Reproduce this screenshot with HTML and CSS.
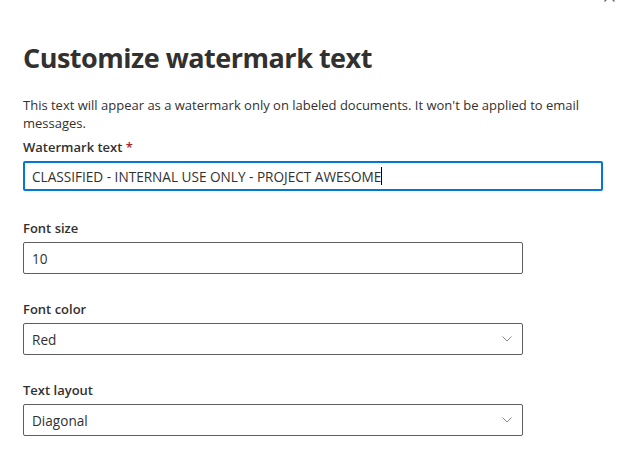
FILE: index.html
```html
<!DOCTYPE html>
<html>
<head>
<meta charset="utf-8">
<link rel="stylesheet" href="styles.css">
</head>
<body>
<div class="panel">
  <button class="close" aria-label="Close">
    <svg width="11" height="11" viewBox="0 0 11 11"><path d="M0.5 0.5 L10.5 10.5 M10.5 0.5 L0.5 10.5" stroke="#605e5c" stroke-width="1.2" fill="none"/></svg>
  </button>
  <h1 class="title">Customize watermark text</h1>
  <p class="desc">This text will appear as a watermark only on labeled documents. It won't be applied to email messages.</p>
  <div class="field first">
    <label class="label">Watermark text <span class="req">*</span></label>
    <div class="input focused"><span class="value">CLASSIFIED - INTERNAL USE ONLY - PROJECT AWESOME</span><span class="caret"></span></div>
  </div>
  <div class="field narrow">
    <label class="label">Font size</label>
    <div class="input"><span class="value">10</span></div>
  </div>
  <div class="field narrow">
    <label class="label">Font color</label>
    <div class="input select"><span class="value">Red</span>
      <svg class="chev" width="10" height="6" viewBox="0 0 10 6"><path d="M0.5 0.5 L5 5 L9.5 0.5" stroke="#8a8886" stroke-width="1" fill="none"/></svg>
    </div>
  </div>
  <div class="field narrow">
    <label class="label">Text layout</label>
    <div class="input select"><span class="value">Diagonal</span>
      <svg class="chev" width="10" height="6" viewBox="0 0 10 6"><path d="M0.5 0.5 L5 5 L9.5 0.5" stroke="#8a8886" stroke-width="1" fill="none"/></svg>
    </div>
  </div>
</div>
</body>
</html>
```

FILE: styles.css
```css
html, body {
  margin: 0;
  padding: 0;
  background: #ffffff;
}
body {
  font-family: "Open Sans", "Noto Sans", sans-serif;
  color: #323130;
}
.panel {
  position: relative;
  width: 580px;
  padding: 0 0 0 23px;
}
.close {
  position: absolute;
  top: -9px;
  left: 604px;
  border: 0;
  background: none;
  padding: 0;
  width: 11px;
  height: 11px;
}
.close svg { display: block; }
.title {
  margin: 0;
  padding-top: 38px;
  font-size: 27px;
  line-height: 40px;
  font-weight: 700;
  letter-spacing: -0.5px;
}
.desc {
  margin: 18px 0 0 0;
  font-size: 13px;
  line-height: 18px;
}
.field {
  display: flex;
  flex-direction: column;
}
.field + .field { margin-top: 23px; }
.first { margin-top: 3px; }
.narrow { width: 500px; }
.label {
  font-size: 13px;
  font-weight: 600;
  line-height: 20px;
  padding: 2px 0 4px;
}
.req { color: #a4262c; }
.input {
  box-sizing: border-box;
  height: 32px;
  border: 1px solid #605e5c;
  border-radius: 2px;
  display: flex;
  align-items: center;
  padding: 0 8px;
  font-size: 13.6px;
}
.focused {
  height: 30px;
  margin-bottom: 2px;
  border: 2px solid #0078d4;
  padding: 0 7px;
}
.caret {
  display: inline-block;
  width: 1px;
  height: 18px;
  background: #000;
}
.select { justify-content: space-between; padding-right: 10px; }
.chev { display: block; }
```
